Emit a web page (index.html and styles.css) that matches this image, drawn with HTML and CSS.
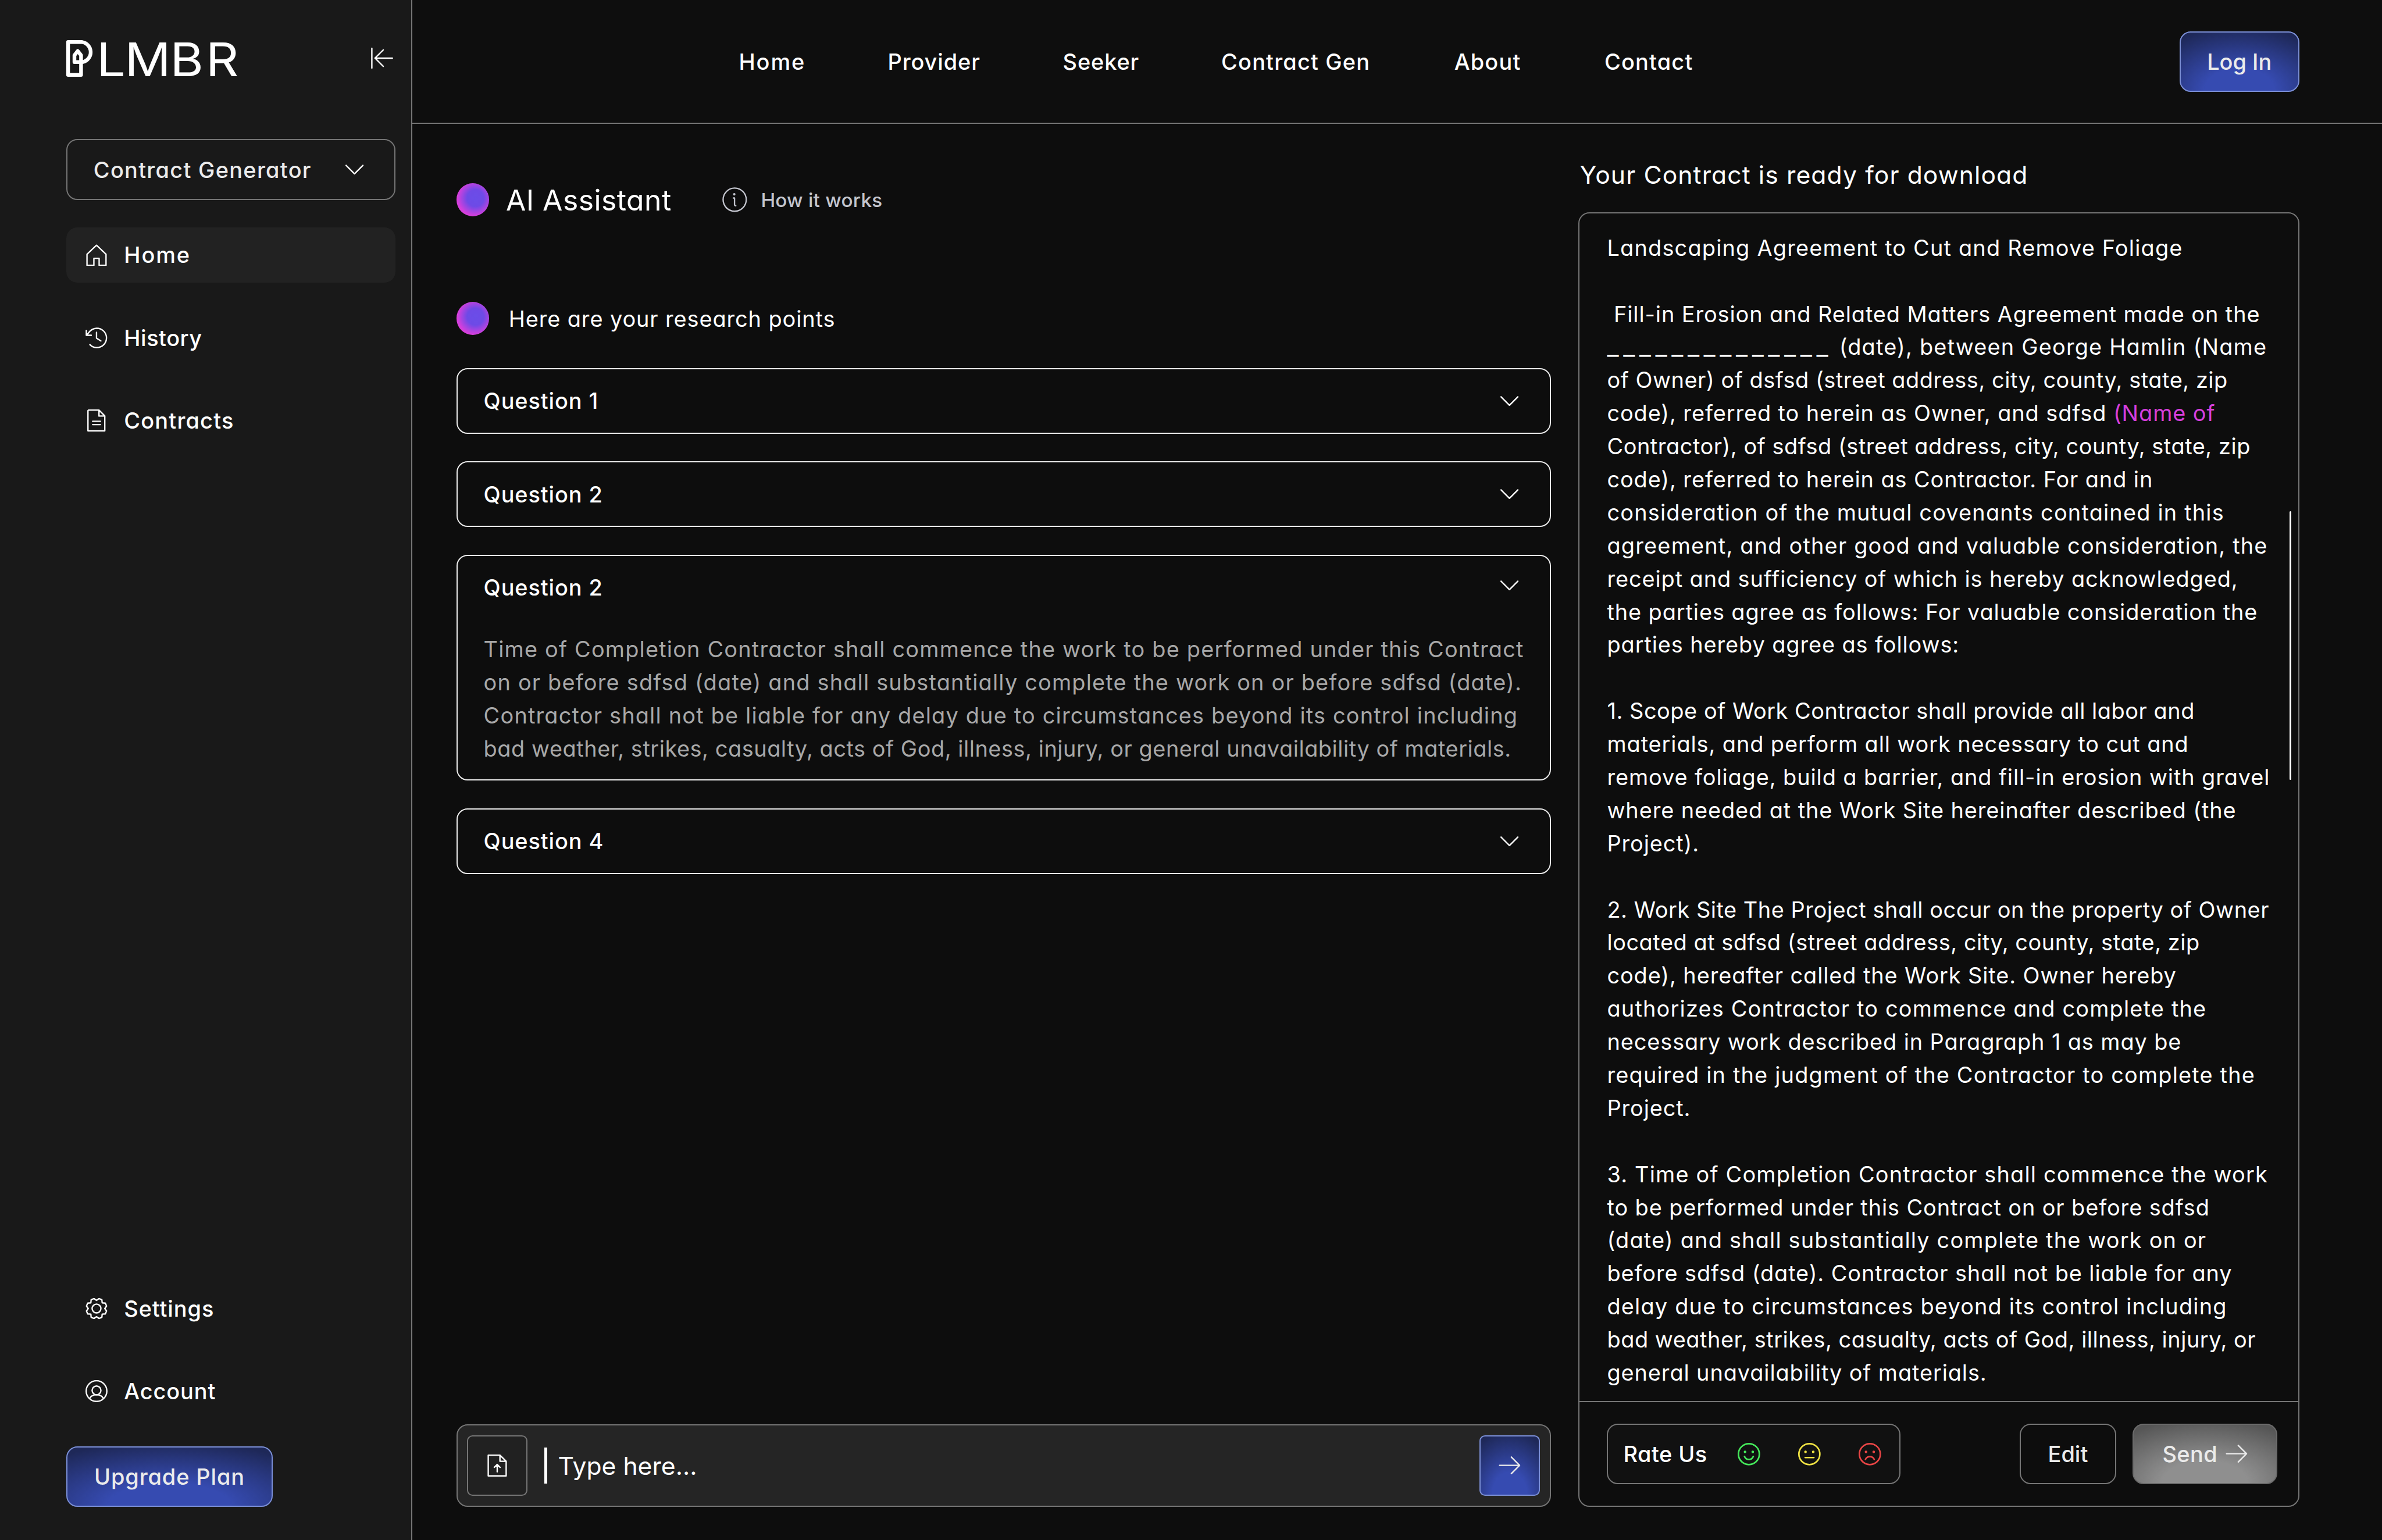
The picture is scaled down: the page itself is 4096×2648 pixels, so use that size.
FILE: index.html
```html
<!DOCTYPE html>
<html lang="en">

<head>
    <meta charset="UTF-8">
    <meta name="viewport" content="width=device-width, initial-scale=1.0">
    <title>PLMBR</title>
    <link rel="stylesheet" href="styles.css">
</head>

<body>
    <div class="wrapper">
        <aside class="sidebar">
            <div class="sidebar__top">
                <svg class="logo" viewBox="0 0 126 28">
                    <path d="M1.3 1.4H11.5A7.4 7.4 0 0 1 12 15.9H5.9V11L8.3 7.9L10.7 11V25.2H1.3Z" fill="none" stroke="#fff" stroke-width="2.7" stroke-linejoin="round" />
                    <text class="logo__text" transform="scale(1.1 1)" y="26" x="20 38.5 68.5 92.1">LMBR</text>
                </svg>
                <svg class="sidebar__collapse" viewBox="0 0 16 16">
                    <path d="M.6 .8V15.2M2.9 8H15.5M8.9 2L2.9 8L8.9 14" />
                </svg>
            </div>

            <div class="select">
                <span class="select__text">Contract Generator</span>
                <svg class="chevron" viewBox="0 0 14 8">
                    <path d="M.9 1L7 7.1L13.1 1" />
                </svg>
            </div>

            <nav class="menu">
                <a class="menu__item menu__item_active">
                    <svg class="menu__icon" viewBox="0 0 16 16">
                        <path d="M1.1 7.2L8 .7L14.9 7.2V15.3H9.9V10.2H6.1V15.3H1.1Z" />
                    </svg>
                    <span class="wider">Home</span>
                </a>
                <a class="menu__item">
                    <svg class="menu__icon" viewBox="0 0 16 16">
                        <path d="M.6 2.6V6.1H4.2M.9 5.9L3.2 3.2A7 7 0 1 1 3.2 12.9M8 4V8.2L11.2 10.2" />
                    </svg>
                    <span class="tight">History</span>
                </a>
                <a class="menu__item">
                    <svg class="menu__icon" viewBox="0 0 16 16">
                        <path d="M2.2 .5H9.8L14 4.7V15.5H1.8V.9ZM9.8 .6V4.8H13.9M5.2 8.6H10.8M5.2 11H10.8" />
                    </svg>
                    <span class="wide">Contracts</span>
                </a>
            </nav>

            <nav class="menu menu_bottom">
                <a class="menu__item">
                    <svg class="menu__icon" viewBox="0 0 16 16">
                        <circle cx="8" cy="8" r="3.2" />
                        <path d="M6.2 .8L8 2.1L9.8 .8L11.9 1.6L12.1 3.9L14.4 4.1L15.3 6.2L14 8L15.3 9.8L14.4 11.9L12.1 12.1L11.9 14.4L9.8 15.2L8 13.9L6.2 15.2L4.1 14.4L3.9 12.1L1.6 11.9L.7 9.8L2 8L.7 6.2L1.6 4.1L3.9 3.9L4.1 1.6Z" />
                    </svg>
                    <span>Settings</span>
                </a>
                <a class="menu__item">
                    <svg class="menu__icon" viewBox="0 0 16 16">
                        <circle cx="8" cy="8" r="7.5" />
                        <circle cx="8" cy="7.5" r="3.2" />
                        <path d="M3 13.4C4.6 9.8 11.4 9.8 13 13.4" />
                    </svg>
                    <span>Account</span>
                </a>
            </nav>

            <button class="btn btn_upgrade">Upgrade Plan</button>
        </aside>

        <div class="page">
            <header class="header">
                <nav class="header__nav">
                    <a class="wider">Home</a>
                    <a>Provider</a>
                    <a>Seeker</a>
                    <a class="wide">Contract Gen</a>
                    <a class="wide">About</a>
                    <a class="wide">Contact</a>
                </nav>
                <button class="btn btn_login">Log In</button>
            </header>

            <main class="main">
                <section class="chat">
                    <div class="chat__head">
                        <span class="orb"></span>
                        <h1 class="chat__title">AI Assistant</h1>
                        <svg class="info" viewBox="0 0 18 18">
                            <circle cx="9" cy="9" r="8.4" />
                            <path d="M8 7.8H8.9V12.6Q8.9 13.4 9.8 13.4" />
                            <circle class="info__dot" cx="8.7" cy="5.1" r=".9" />
                        </svg>
                        <span class="chat__how">How it works</span>
                    </div>

                    <div class="chat__message">
                        <span class="orb"></span>
                        <p class="chat__text">Here are your research points</p>
                    </div>

                    <div class="questions">
                        <div class="question">
                            <div class="question__head">
                                <h2 class="question__title">Question 1</h2>
                                <svg class="chevron" viewBox="0 0 14 8">
                                    <path d="M.9 1L7 7.1L13.1 1" />
                                </svg>
                            </div>
                        </div>
                        <div class="question">
                            <div class="question__head">
                                <h2 class="question__title">Question 2</h2>
                                <svg class="chevron" viewBox="0 0 14 8">
                                    <path d="M.9 1L7 7.1L13.1 1" />
                                </svg>
                            </div>
                        </div>
                        <div class="question question_open">
                            <div class="question__head">
                                <h2 class="question__title">Question 2</h2>
                                <svg class="chevron" viewBox="0 0 14 8">
                                    <path d="M.9 1L7 7.1L13.1 1" />
                                </svg>
                            </div>
                            <p class="question__text"><span class="wide">Time of Completion Contractor shall commence the work to be performed under this Contract<br>
                                on or before sdfsd (date) and shall substantially complete the work on or before sdfsd (date).<br>
                                Contractor shall not be liable for any delay due to circumstances beyond its control including</span><br>
                                <span class="tight">bad weather, strikes, casualty, acts of God, illness, injury, or general unavailability of materials.</span></p>
                        </div>
                        <div class="question">
                            <div class="question__head">
                                <h2 class="question__title">Question 4</h2>
                                <svg class="chevron" viewBox="0 0 14 8">
                                    <path d="M.9 1L7 7.1L13.1 1" />
                                </svg>
                            </div>
                        </div>
                    </div>

                    <div class="prompt">
                        <button class="prompt__file">
                            <svg class="prompt__icon" viewBox="0 0 16 16">
                                <path d="M1.5 .5H10L14.5 4.9V15.5H1.5ZM10 .6V4.9H14.4M8 12.6V7.4M5.9 9.3L8 7.2L10.1 9.3" />
                            </svg>
                        </button>
                        <span class="prompt__caret"></span>
                        <span class="prompt__text">Type here...</span>
                        <button class="btn btn_go">
                            <svg class="arrow" viewBox="0 0 16 14">
                                <path d="M.7 7H15.2M9.2 1L15.2 7L9.2 13" />
                            </svg>
                        </button>
                    </div>
                </section>

                <section class="contract">
                    <h2 class="contract__title">Your Contract is ready for download</h2>
                    <div class="contract__card">
                        <div class="contract__body">
                            <div class="contract__text">
                                <p class="wide">Landscaping Agreement to Cut and Remove Foliage</p>
                                <p>&nbsp;Fill-in Erosion and Related Matters Agreement made on the<br>
                                    <span class="blank">______________</span> <span class="wide">(date), between George Hamlin (Name</span><br>
                                    <span class="tight">of Owner) of dsfsd (street address, city, county, state, zip</span><br>
                                    code), referred to herein as Owner, and sdfsd <span class="mark">(Name of</span><br>
                                    <span class="tight">Contractor), of sdfsd (street address, city, county, state, zip</span><br>
                                    code), referred to herein as Contractor. For and in<br>
                                    <span class="wide">consideration of the mutual covenants contained in this<br>
                                    agreement, and other good and valuable consideration, the</span><br>
                                    receipt and sufficiency of which is hereby acknowledged,<br>
                                    the parties agree as follows: For valuable consideration the<br>
                                    parties hereby agree as follows:</p>
                                <p><span class="tight">1. Scope of Work Contractor shall provide all labor and</span><br>
                                    materials, and perform all work necessary to cut and<br>
                                    remove foliage, build a barrier, and fill-in erosion with gravel<br>
                                    where needed at the Work Site hereinafter described (the<br>
                                    Project).</p>
                                <p><span class="tight">2. Work Site The Project shall occur on the property of Owner<br>
                                    located at sdfsd (street address, city, county, state, zip</span><br>
                                    code), hereafter called the Work Site. Owner hereby<br>
                                    <span class="wide">authorizes Contractor to commence and complete the</span><br>
                                    necessary work described in Paragraph 1 as may be<br>
                                    <span class="wide">required in the judgment of the Contractor to complete the</span><br>
                                    Project.</p>
                                <p><span class="wide">3. Time of Completion Contractor shall commence the work</span><br>
                                    to be performed under this Contract on or before sdfsd<br>
                                    <span class="wide">(date) and shall substantially complete the work on or</span><br>
                                    before sdfsd (date). Contractor shall not be liable for any<br>
                                    <span class="wide">delay due to circumstances beyond its control including</span><br>
                                    <span class="tight">bad weather, strikes, casualty, acts of God, illness, injury, or</span><br>
                                    general unavailability of materials.</p>
                            </div>
                            <span class="scrollbar"></span>
                        </div>
                        <div class="contract__footer">
                            <div class="rate">
                                <span class="rate__text">Rate Us</span>
                                <svg class="face face_good" viewBox="0 0 18 18">
                                    <circle cx="9" cy="9" r="7.6" />
                                    <path d="M5.8 10.7C7 13.7 11 13.7 12.2 10.7" />
                                    <circle class="face__eye" cx="6.2" cy="7.4" r=".95" />
                                    <circle class="face__eye" cx="11.8" cy="7.4" r=".95" />
                                </svg>
                                <svg class="face face_ok" viewBox="0 0 18 18">
                                    <circle cx="9" cy="9" r="7.6" />
                                    <path d="M6 11.5H12.2" />
                                    <circle class="face__eye" cx="6.2" cy="7.4" r=".95" />
                                    <circle class="face__eye" cx="11.8" cy="7.4" r=".95" />
                                </svg>
                                <svg class="face face_bad" viewBox="0 0 18 18">
                                    <circle cx="9" cy="9" r="7.6" />
                                    <path d="M5.8 12.9C7 10.1 11 10.1 12.2 12.9" />
                                    <circle class="face__eye" cx="6.2" cy="7.4" r=".95" />
                                    <circle class="face__eye" cx="11.8" cy="7.4" r=".95" />
                                </svg>
                            </div>
                            <button class="btn btn_edit">Edit</button>
                            <button class="btn btn_send">Send
                                <svg class="arrow" viewBox="0 0 16 14">
                                    <path d="M.7 7H15.2M9.2 1L15.2 7L9.2 13" />
                                </svg>
                            </button>
                        </div>
                    </div>
                </section>
            </main>
        </div>
    </div>
</body>

</html>
```
FILE: styles.css
```css
* {
    padding: 0;
    margin: 0;
    box-sizing: border-box;
}

/* 1rem = 10px of the 1728px wide layout */
html {
    font-size: calc(100vw / 172.8);
}

body {
    font-family: Inter, 'Open Sans', sans-serif;
    font-feature-settings: 'cv11';
    font-size: 1.6rem;
    letter-spacing: .0235em;
    color: #fff;
    background-color: #0d0d0d;
}

svg {
    display: block;
    flex-shrink: 0;
    fill: none;
    stroke: #fff;
    stroke-width: 1;
    stroke-linecap: round;
    stroke-linejoin: round;
}

h1,
h2 {
    font-weight: 400;
}

.wrapper {
    display: grid;
    grid-template-columns: 29.9rem 1fr;
    height: 100vh;
    overflow: hidden;
    white-space: nowrap;
}

/* tracking */
.tight {
    letter-spacing: .014em;
}

.wide {
    letter-spacing: .031em;
}

.wider {
    letter-spacing: .05em;
}

/* buttons */
.btn {
    display: flex;
    align-items: center;
    justify-content: center;
    height: 4.4rem;
    border: .1rem solid #7b8fd6;
    border-radius: .8rem;
    font: inherit;
    font-feature-settings: inherit;
    font-weight: 500;
    letter-spacing: inherit;
    color: #ebebeb;
    background: radial-gradient(ellipse 85% 110% at 50% 100%, #364bb1 35%, #1e2858 100%);
}

.btn svg {
    stroke: #ebebeb;
}

.btn_upgrade {
    width: 15rem;
    margin-top: 2rem;
}

.btn_login {
    width: 8.7rem;
    letter-spacing: 0;
}

.btn_go {
    width: 4.4rem;
    margin-left: auto;
    border-radius: .4rem;
}

.btn_edit {
    width: 7rem;
    margin-left: auto;
    border-color: #757575;
    letter-spacing: 0;
    background: none;
}

.btn_send {
    width: 10.5rem;
    gap: .6rem;
    border-color: #6b6b6b;
    letter-spacing: .01em;
    background: radial-gradient(ellipse 85% 110% at 50% 100%, #8f8f8f 35%, #565656 100%);
}

.arrow {
    width: 1.6rem;
    height: 1.4rem;
}

.chevron {
    width: 1.4rem;
    height: .8rem;
}

/* sidebar */
.sidebar {
    display: flex;
    flex-direction: column;
    padding: 2.9rem 1.1rem 2.4rem 4.8rem;
    border-right: .1rem solid #757575;
    background-color: #191919;
}

.sidebar__top {
    display: flex;
    align-items: center;
    justify-content: space-between;
    height: 2.8rem;
}

.logo {
    width: 12.6rem;
    height: 2.8rem;
    overflow: visible;
}

.logo__text {
    font-size: 33.6px;
    letter-spacing: 0;
    fill: #fff;
    stroke: none;
}

.sidebar__collapse {
    width: 1.6rem;
    height: 1.6rem;
    margin: -.2rem .2rem 0 0;
}

.select {
    display: flex;
    align-items: center;
    justify-content: space-between;
    width: 23.9rem;
    height: 4.4rem;
    margin-top: 4.4rem;
    padding: 0 2.2rem 0 1.9rem;
    border: .1rem solid #757575;
    border-radius: .8rem;
    font-weight: 500;
    letter-spacing: .034em;
    color: #ebebeb;
}

.menu {
    display: flex;
    flex-direction: column;
    gap: 2rem;
    width: 23.9rem;
    margin-top: 2rem;
}

.menu_bottom {
    margin-top: auto;
}

.menu__item {
    display: flex;
    align-items: center;
    gap: 1.2rem;
    height: 4rem;
    padding-left: 1.4rem;
    border-radius: .8rem;
    font-weight: 500;
}

.menu__item_active {
    background-color: #222;
}

.menu__icon {
    width: 1.6rem;
    height: 1.6rem;
}

/* header */
.page {
    display: flex;
    flex-direction: column;
    min-height: 0;
}

.header {
    display: flex;
    align-items: center;
    justify-content: space-between;
    height: 9rem;
    padding: 0 6rem 0 23.7rem;
    border-bottom: .1rem solid #757575;
    background-color: #0e0e0e;
}

.header__nav {
    display: grid;
    grid-template-columns: 10.8rem 12.7rem 11.5rem 16.9rem 10.9rem auto;
    font-weight: 500;
}

/* main */
.main {
    display: grid;
    grid-template-columns: 79.4rem 52.3rem;
    gap: 2rem;
    flex: 1;
    min-height: 0;
    padding: 0 0 2.4rem 3.2rem;
}

.chat {
    display: flex;
    flex-direction: column;
    padding-top: 4.3rem;
}

.orb {
    width: 2.4rem;
    height: 2.4rem;
    border-radius: 50%;
    background: radial-gradient(circle at 58% 45%, #6a4de8 0, #6e4ae6 32%, #d63fdc 68%);
}

.chat__head,
.chat__message {
    display: flex;
    align-items: center;
    height: 2.4rem;
}

.chat__title {
    width: 15.7rem;
    margin-left: 1.2rem;
    font-size: 2.1rem;
    letter-spacing: .01em;
}

.info {
    width: 1.8rem;
    height: 1.8rem;
    stroke: #c3c5ce;
}

.info__dot {
    fill: #c3c5ce;
    stroke: none;
}

.chat__how {
    margin-left: 1rem;
    font-size: 1.4rem;
    font-weight: 500;
    letter-spacing: .008em;
    color: #c3c5ce;
}

.chat__message {
    margin-top: 6.2rem;
}

.chat__text {
    margin-left: 1.4rem;
}

.questions {
    display: flex;
    flex-direction: column;
    gap: 2rem;
    margin-top: 2.4rem;
}

.question {
    padding: 0 2.2rem 0 1.9rem;
    border: .1rem solid #ebebeb;
    border-radius: .8rem;
}

.question_open {
    height: 16.4rem;
}

.question_open .chevron {
    margin-bottom: .3rem;
}

.question__head {
    display: flex;
    align-items: center;
    justify-content: space-between;
    height: 4.6rem;
}

.question__title {
    font-size: inherit;
    font-weight: 500;
}

.question__text {
    margin-top: 1rem;
    line-height: 2.4rem;
    color: #a8a8a8;
}

.prompt {
    display: flex;
    align-items: center;
    height: 6rem;
    margin-top: auto;
    padding: 0 .7rem;
    border: .1rem solid #757575;
    border-radius: .8rem;
    background-color: #252525;
}

.prompt__file {
    display: flex;
    align-items: center;
    justify-content: center;
    width: 4.4rem;
    height: 4.4rem;
    border: .1rem solid #757575;
    border-radius: .4rem;
    background-color: #212121;
}

.prompt__icon {
    width: 1.6rem;
    height: 1.6rem;
}

.prompt__caret {
    width: .2rem;
    height: 2.6rem;
    margin-left: 1.2rem;
    background-color: #fff;
}

.prompt__text {
    margin-left: .8rem;
    font-size: 1.8rem;
    letter-spacing: 0;
}

/* contract */
.contract {
    display: flex;
    flex-direction: column;
    min-height: 0;
    padding-top: 2.5rem;
}

.contract__title {
    height: 2.4rem;
    margin: 0 0 1.5rem .1rem;
    font-size: 1.8rem;
    line-height: 2.4rem;
    letter-spacing: .0255em;
}

.contract__card {
    display: flex;
    flex: 1;
    flex-direction: column;
    min-height: 0;
    border: .1rem solid #757575;
    border-radius: .8rem;
}

.contract__body {
    display: flex;
    flex: 1;
    justify-content: space-between;
    min-height: 0;
    padding: 1.3rem .5rem 0 2rem;
}

.contract__text {
    display: flex;
    flex-direction: column;
    gap: 2.4rem;
    line-height: 2.4rem;
}

.blank {
    font-size: 1.86rem;
    line-height: 1;
    letter-spacing: .32rem;
}

.mark {
    color: #d63fdc;
}

.scrollbar {
    width: .13rem;
    height: 19.5rem;
    margin-top: 20.3rem;
    border-radius: .1rem;
    background-color: #fff;
}

.contract__footer {
    display: flex;
    align-items: center;
    gap: 1.2rem;
    height: 7.6rem;
    padding: 0 1.5rem 0 2rem;
    border-top: .1rem solid #757575;
}

.rate {
    display: flex;
    align-items: center;
    gap: 2.6rem;
    width: 21.3rem;
    height: 4.4rem;
    padding-left: 1.1rem;
    border: .1rem solid #757575;
    border-radius: .8rem;
    background-color: #111;
}

.rate__text {
    width: 5.6rem;
    font-weight: 500;
    letter-spacing: .012em;
}

.face {
    width: 1.8rem;
    height: 1.8rem;
    stroke-width: 1.15;
}

.face_good {
    stroke: #45e85b;
    fill: #45e85b;
}

.face_ok {
    stroke: #efe243;
    fill: #efe243;
}

.face_bad {
    stroke: #e84545;
    fill: #e84545;
}

.face circle,
.face path {
    fill: none;
}

.face .face__eye {
    fill: inherit;
    stroke: none;
}
```
